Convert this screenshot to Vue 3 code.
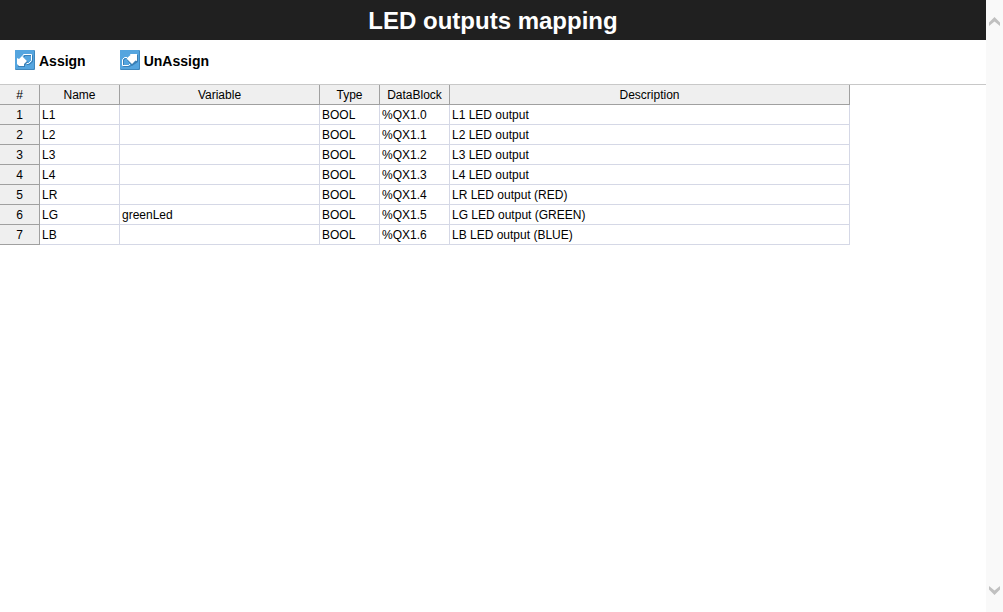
<script setup>
const columns = ['#', 'Name', 'Variable', 'Type', 'DataBlock', 'Description']
const rows = [
  { name: 'L1', variable: '', type: 'BOOL', block: '%QX1.0', description: 'L1 LED output' },
  { name: 'L2', variable: '', type: 'BOOL', block: '%QX1.1', description: 'L2 LED output' },
  { name: 'L3', variable: '', type: 'BOOL', block: '%QX1.2', description: 'L3 LED output' },
  { name: 'L4', variable: '', type: 'BOOL', block: '%QX1.3', description: 'L4 LED output' },
  { name: 'LR', variable: '', type: 'BOOL', block: '%QX1.4', description: 'LR LED output (RED)' },
  { name: 'LG', variable: 'greenLed', type: 'BOOL', block: '%QX1.5', description: 'LG LED output (GREEN)' },
  { name: 'LB', variable: '', type: 'BOOL', block: '%QX1.6', description: 'LB LED output (BLUE)' }
]
</script>

<template>
  <div class="window">
    <main class="content">
      <h1 class="title">LED outputs mapping</h1>
      <div class="toolbar">
        <button type="button" class="action">
          <svg class="icon" viewBox="0 0 20 20" aria-hidden="true">
            <rect width="20" height="20" rx="1" fill="#3f87bd" />
            <rect width="19" height="19" rx="1" fill="#55a5df" />
            <path d="M9.500 7V5.500H17.500V12L14 14.500H12" fill="none" stroke="#3a7fb5" />
            <path d="M7.500 6.500L8.500 4.500H16.500V10.500L13.500 13.500H11" fill="none" stroke="#fff" />
            <path d="M3 9L5 10L8 7L13 12L10 15V17H3Z" fill="#3a7fb5" />
            <path d="M2 8L4 9L7 6L12 11L9 14V16H4L2 14Z" fill="#fff" />
          </svg>
          <span>Assign</span>
        </button>
        <button type="button" class="action">
          <svg class="icon" viewBox="0 0 20 20" aria-hidden="true">
            <rect width="20" height="20" rx="1" fill="#3f87bd" />
            <rect width="19" height="19" rx="1" fill="#55a5df" />
            <path d="M7 8.500H5.500L3.500 10V16.500H9.500L12 15" fill="none" stroke="#3a7fb5" />
            <path d="M7 7.500H4.500L2.500 9.500V15.500H8.500L10.500 13.500" fill="none" stroke="#fff" />
            <path d="M11 5H18V12L12 16L7 10Z" fill="#3a7fb5" />
            <path d="M10 4H17V11L15.500 10.500L12 14L6.500 8.500L10.500 5Z" fill="#fff" />
          </svg>
          <span>UnAssign</span>
        </button>
      </div>
      <div class="grid-area">
        <table class="grid">
          <colgroup>
            <col class="c-index" /><col class="c-name" /><col class="c-variable" />
            <col class="c-type" /><col class="c-block" /><col class="c-description" />
          </colgroup>
          <thead>
            <tr>
              <th v-for="column in columns" :key="column" scope="col">{{ column }}</th>
            </tr>
          </thead>
          <tbody>
            <tr v-for="(row, index) in rows" :key="row.name">
              <th scope="row">{{ index + 1 }}</th>
              <td>{{ row.name }}</td>
              <td>{{ row.variable }}</td>
              <td>{{ row.type }}</td>
              <td>{{ row.block }}</td>
              <td>{{ row.description }}</td>
            </tr>
          </tbody>
        </table>
      </div>
    </main>
    <div class="scrollbar">
      <button type="button" class="arrow" aria-label="Scroll up">
        <svg viewBox="0 0 11 9" aria-hidden="true"><path d="M0 5.500L5.500 0L11 5.500V9L5.500 4.500L0 9Z" /></svg>
      </button>
      <button type="button" class="arrow" aria-label="Scroll down">
        <svg viewBox="0 0 11 9" aria-hidden="true"><path d="M0 0L5.500 4.500L11 0V3.500L5.500 9L0 3.500Z" /></svg>
      </button>
    </div>
  </div>
</template>

<style>
body {
  margin: 0;
  background: #fff;
}
</style>

<style scoped>
.window {
  display: flex;
  min-height: 100vh;
  font-family: "Liberation Sans", Arial, sans-serif;
  font-size: 12px;
  color: #000;
}
.content {
  flex: 1;
  min-width: 0;
}
.title {
  margin: 0;
  padding-top: 2px;
  background: #202020;
  color: #fff;
  font-size: 24px;
  line-height: 38px;
  font-weight: bold;
  text-align: center;
}
.toolbar {
  display: flex;
  gap: 34px;
  padding: 10px 15px 14px;
}
.action {
  display: flex;
  align-items: center;
  gap: 4px;
  padding: 0;
  border: 0;
  background: none;
  font-family: inherit;
  font-size: 14px;
  line-height: 18px;
  font-weight: bold;
  color: #000;
}
.action span {
  padding-top: 2px;
}
.icon {
  display: block;
  width: 20px;
  height: 20px;
}
.grid-area {
  border-top: 1px solid #c8c8c8;
}
.grid {
  width: 850px;
  table-layout: fixed;
  border-collapse: separate;
  border-spacing: 0;
}
.c-index { width: 40px; }
.c-name { width: 80px; }
.c-variable { width: 200px; }
.c-type { width: 60px; }
.c-block { width: 70px; }
.c-description { width: 400px; }
.grid th,
.grid td {
  box-sizing: border-box;
  height: 20px;
  padding: 2px 2px 0;
  line-height: 17px;
  border-right: 1px solid #d5d8e6;
  border-bottom: 1px solid #d5d8e6;
  text-align: left;
  white-space: nowrap;
}
.grid th {
  background: #efefef;
  border-color: #a0a0a0;
  font-weight: normal;
  text-align: center;
}
.scrollbar {
  display: flex;
  flex-direction: column;
  justify-content: space-between;
  width: 17px;
  background: #f9f9f9;
}
.arrow {
  display: flex;
  align-items: center;
  justify-content: center;
  height: 43px;
  padding: 0;
  border: 0;
  background: none;
}
.arrow svg {
  width: 11px;
  height: 9px;
  fill: #c0c0c0;
}
</style>
